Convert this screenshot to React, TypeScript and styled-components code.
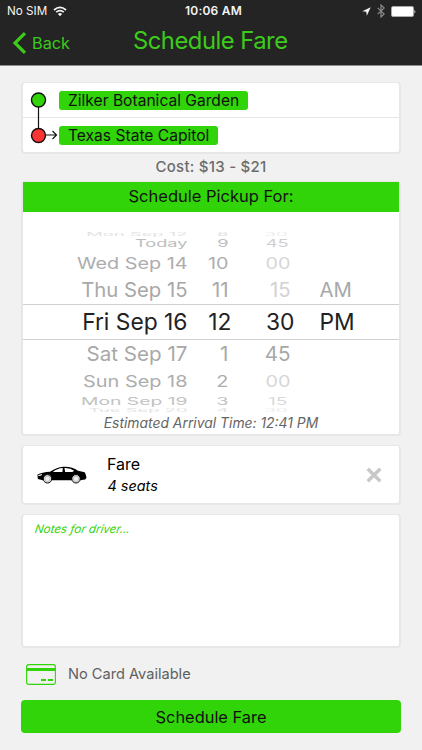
import React from "react";
import styled, { createGlobalStyle } from "styled-components";

const GREEN = "#30d408";

const GlobalStyle = createGlobalStyle`
  * { box-sizing: border-box; }
  body {
    margin: 0;
    background: #f1f1f1;
    font-family: Inter, "Liberation Sans", sans-serif;
    color: #111;
  }
`;

const Screen = styled.div`
  width: 422px;
  height: 750px;
  overflow: hidden;
  display: flex;
  flex-direction: column;
`;

const Header = styled.header`
  height: 66px;
  background: #242424;
  border-bottom: 1px solid #8f8f8f;
  flex: none;
`;

const StatusBar = styled.div`
  height: 22px;
  padding: 0 6px 0 7px;
  display: grid;
  grid-template-columns: 1fr auto 1fr;
  align-items: center;
  color: #f4f4f4;
  font-size: 11.7px;
  line-height: 22px;
`;

const StatusSide = styled.div<{ $end?: boolean }>`
  display: flex;
  align-items: center;
  justify-content: ${(p) => (p.$end ? "flex-end" : "flex-start")};
  gap: 6px;
`;

const Clock = styled.div`
  font-size: 12px;
  font-weight: 600;
  letter-spacing: 0.2px;
  padding-left: 4px;
`;

const NavBar = styled.nav`
  height: 43px;
  display: grid;
  grid-template-columns: 121px auto 1fr;
  align-items: center;
  padding-left: 12px;
  color: #3ccb1a;
`;

const BackButton = styled.div`
  display: flex;
  align-items: center;
  gap: 5px;
  font-size: 16.3px;
  line-height: 20px;
  height: 20px;
  margin-bottom: 1px;
`;

const Title = styled.h1`
  margin: 0 0 6px;
  font-size: 23.8px;
  line-height: 30px;
  font-weight: 400;
  letter-spacing: -0.5px;
`;

const Content = styled.main`
  flex: 1;
  padding: 16px 21px 0;
  display: flex;
  flex-direction: column;
`;

const Card = styled.section`
  background: #fff;
  border: 2px solid #e7e7e7;
  border-top-width: 1.5px;
  border-radius: 4px;
  flex: none;
`;

const RouteCard = styled(Card)`
  height: 72px;
  display: grid;
  grid-template-columns: 36px 1fr;
`;

const Stops = styled.div`
  grid-column: 2;
  grid-row: 1;
  margin-left: -36px;
`;

const StopRow = styled.div<{ $last?: boolean }>`
  height: ${(p) => (p.$last ? 34 : 35)}px;
  padding-left: 36px;
  display: flex;
  align-items: center;
  border-bottom: ${(p) => (p.$last ? "none" : "1.5px solid #e7e7e7")};
`;

const RouteLine = styled.svg`
  grid-column: 1;
  grid-row: 1;
  width: 36px;
  height: 68px;
  z-index: 1;
`;

const Pill = styled.span`
  height: 19px;
  padding: 0 9px;
  border-radius: 3px;
  background: ${GREEN};
  font-size: 15.6px;
  line-height: 20px;
`;

const Cost = styled.div`
  height: 27px;
  text-align: center;
  font-size: 15px;
  font-weight: 500;
  line-height: 26px;
  letter-spacing: 0.25px;
  color: #6c6c6c;
`;

const PickupCard = styled(Card)`
  height: 255px;
`;

const CardHeading = styled.h2`
  margin: 0;
  height: 30px;
  background: ${GREEN};
  font-size: 16.5px;
  font-weight: 400;
  line-height: 29px;
  text-align: center;
`;

const Wheel = styled.div`
  margin-top: 20px;
  height: 180px;
  display: flex;
  flex-direction: column;
`;

const WheelRow = styled.div<{ $h: number; $size: number; $squash: number; $ink: string; $active?: boolean }>`
  flex: none;
  height: ${(p) => p.$h}px;
  display: grid;
  grid-template-columns: 164.5px ${(p) => (p.$active ? "44px 63px 25px" : "41px 62px 29px")} 1fr;
  align-items: center;
  color: ${(p) => p.$ink};
  font-size: ${(p) => p.$size}px;
  border: solid #cfcfcf;
  border-width: ${(p) => (p.$active ? "1px 0" : "0")};
  line-height: ${(p) => p.$h}px;
  & > span {
    display: flex;
    align-items: center;
    justify-content: flex-end;
    height: 0;
    white-space: nowrap;
    transform: scaleY(${(p) => p.$squash});
  }
`;

const Minutes = styled.span<{ $ink: string; $inset?: number }>`
  color: ${(p) => p.$ink};
  padding-right: ${(p) => p.$inset ?? 0}px;
`;

const Meridiem = styled.span`
  grid-column: 5;
  && { justify-content: flex-start; }
`;

const Arrival = styled.div`
  height: 20px;
  text-align: center;
  color: #666;
  font-size: 13.9px;
  font-style: italic;
  line-height: 22px;
`;

const FareCard = styled(Card)`
  height: 60px;
  margin-top: 9px;
  padding: 0 17px 0 14px;
  display: flex;
  align-items: center;
`;

const FareText = styled.div`
  flex: 1;
  margin-left: 20px;
  color: #000;
  font-size: 16px;
  line-height: 22px;
`;

const Seats = styled.div`
  padding-left: 0.5px;
  font-size: 14.4px;
  font-style: italic;
`;

const NotesCard = styled(Card)`
  height: 134px;
  margin-top: 9px;
  padding: 5px 12px;
`;

const Placeholder = styled.div`
  width: max-content;
  color: ${GREEN};
  font-size: 11.6px;
  font-style: italic;
  line-height: 18px;
  transform: skewX(-10deg);
`;

const Payment = styled.div`
  height: 52px;
  flex: none;
  padding-left: 5px;
  display: flex;
  align-items: center;
  gap: 12px;
  color: #5f5f5f;
  font-size: 14.6px;
`;

const SubmitButton = styled.button`
  height: 33px;
  width: 380px;
  border: 0;
  padding: 0;
  border-radius: 4px;
  background: ${GREEN};
  color: #111;
  font: 400 16.4px/34px Inter, "Liberation Sans", sans-serif;
`;

type Row = {
  day: string;
  hour: string;
  minute: string;
  meridiem?: string;
  h: number;
  size: number;
  squash: number;
  ink: string;
  minuteInk: string;
  inset?: number;
  active?: boolean;
};

const rows: Row[] = [
  { day: "Mon Sep 12", hour: "8", minute: "30", h: 4, size: 18.4, squash: 0.24, ink: "#e2e2e2", minuteInk: "#ececec", inset: 3 },
  { day: "Today", hour: "9", minute: "45", h: 14.5, size: 18.2, squash: 0.58, ink: "#bdbdbd", minuteInk: "#cecece", inset: 2 },
  { day: "Wed Sep 14", hour: "10", minute: "00", h: 25, size: 19.8, squash: 0.8, ink: "#adadad", minuteInk: "#d6d6d6" },
  { day: "Thu Sep 15", hour: "11", minute: "15", meridiem: "AM", h: 28.5, size: 20.3, squash: 0.97, ink: "#a8a8a8", minuteInk: "#d2d2d2" },
  { day: "Fri Sep 16", hour: "12", minute: "30", meridiem: "PM", h: 36, size: 22.8, squash: 1, ink: "#222", minuteInk: "#222", active: true },
  { day: "Sat Sep 17", hour: "1", minute: "45", h: 28, size: 20.6, squash: 0.97, ink: "#a8a8a8", minuteInk: "#a8a8a8" },
  { day: "Sun Sep 18", hour: "2", minute: "00", h: 25, size: 19.9, squash: 0.8, ink: "#adadad", minuteInk: "#d6d6d6" },
  { day: "Mon Sep 19", hour: "3", minute: "15", h: 15, size: 19.3, squash: 0.55, ink: "#c2c2c2", minuteInk: "#dadada", inset: 3 },
  { day: "Tue Sep 20", hour: "4", minute: "30", h: 4, size: 18.4, squash: 0.24, ink: "#e2e2e2", minuteInk: "#ececec", inset: 3 },
];

const WifiIcon = () => (
  <svg width="14" height="11" viewBox="0 0 14 11" fill="none" stroke="#f4f4f4" strokeWidth="1.7">
    <path d="M1 4Q7-1.2 13 4M3.2 6.2Q7 2.9 10.8 6.2" />
    <path d="M4.9 7.9Q7 6.3 9.1 7.9L7 10.2Z" fill="#f4f4f4" stroke="none" />
  </svg>
);

const LocationIcon = () => (
  <svg width="9" height="9" viewBox="0 0 9 9" fill="#f4f4f4">
    <path d="M8.7.3.3 4.2l4 .5.5 4Z" />
  </svg>
);

const BluetoothIcon = () => (
  <svg width="8" height="14" viewBox="0 0 8 14" fill="none" stroke="#8b8b8b" strokeWidth="1.2">
    <path d="M.7 3.9 7.2 10 4 13V1l3.2 3L.7 10.1" />
  </svg>
);

const BatteryIcon = () => (
  <svg width="25" height="11" viewBox="0 0 25 11">
    <rect x=".5" y=".5" width="22" height="10" rx="1.5" fill="#fff" stroke="#a9a9a9" />
    <path d="M23.5 3.5q1.5 2 0 4Z" fill="#fff" />
  </svg>
);

const ChevronIcon = () => (
  <svg width="15" height="22" viewBox="0 0 15 22" fill="none" stroke="#3ccb1a" strokeWidth="3.2">
    <path d="M13 1.2 3 11l10 9.8" />
  </svg>
);

const CarIcon = () => (
  <svg width="50" height="18" viewBox="0 0 50 18">
    <path d="M.5 8.6Q5 6.2 13 5.8 20 1 26 .7q9-.5 15 4l6.7 1.5 1 2.3.8 3.2-1.3 1.7-5 .8H5.8L.8 13Z" fill="#000" />
    <path d="M15.8 6q4.5-3.6 10-3.9l-.4 4ZM27.5 2.1q6-.2 9.7 2.6l-1.8 1.4h-7.3ZM1.2 8.9l4-1-.8 1.5-3 .6Z" fill="#fff" />
    <g fill="#eee" stroke="#000" strokeWidth="1">
      <circle cx="10.5" cy="12.8" r="4.2" />
      <circle cx="39" cy="12.8" r="4.2" />
    </g>
    <g fill="none" stroke="#999" strokeWidth=".6">
      <circle cx="10.5" cy="12.8" r="2.7" />
      <circle cx="39" cy="12.8" r="2.7" />
    </g>
  </svg>
);

const CloseIcon = () => (
  <svg width="16" height="16" viewBox="0 0 16 16" stroke="#c8c8c8" strokeWidth="3.4">
    <path d="m1.7 1.7 12.6 12.6m0-12.6L1.7 14.3" />
  </svg>
);

const CreditCardIcon = () => (
  <svg width="30" height="21" viewBox="0 0 30 21" fill="none" stroke={GREEN}>
    <rect x=".6" y=".6" width="28.8" height="19.8" rx="2.4" strokeWidth="1.1" />
    <path d="M1 5.5h28" strokeWidth="3" />
    <path d="M15 16h5m2 0h5" strokeWidth="1.9" />
  </svg>
);

export default function App() {
  return (
    <Screen>
      <GlobalStyle />
      <Header>
        <StatusBar>
          <StatusSide>
            No SIM
            <WifiIcon />
          </StatusSide>
          <Clock>10:06 AM</Clock>
          <StatusSide $end>
            <LocationIcon />
            <BluetoothIcon />
            <BatteryIcon />
          </StatusSide>
        </StatusBar>
        <NavBar>
          <BackButton>
            <ChevronIcon />
            Back
          </BackButton>
          <Title>Schedule Fare</Title>
        </NavBar>
      </Header>
      <Content>
        <RouteCard>
          <RouteLine viewBox="0 0 36 68">
            <path d="M15.5 17v35M23 52h10M29.5 48l4 4-4 4" fill="none" stroke="#111" strokeWidth="1.2" />
            <circle cx="15.5" cy="17" r="7" fill={GREEN} stroke="#111" strokeWidth="1.4" />
            <circle cx="15.5" cy="52.5" r="7" fill="#fb3434" stroke="#111" strokeWidth="1.4" />
          </RouteLine>
          <Stops>
            <StopRow>
              <Pill>Zilker Botanical Garden</Pill>
            </StopRow>
            <StopRow $last>
              <Pill>Texas State Capitol</Pill>
            </StopRow>
          </Stops>
        </RouteCard>
        <Cost>Cost: $13 - $21</Cost>
        <PickupCard>
          <CardHeading>Schedule Pickup For:</CardHeading>
          <Wheel>
            {rows.map((r) => (
              <WheelRow key={r.day} $h={r.h} $size={r.size} $squash={r.squash} $ink={r.ink} $active={r.active}>
                <span>{r.day}</span>
                <span>{r.hour}</span>
                <Minutes $ink={r.minuteInk} $inset={r.inset}>
                  {r.minute}
                </Minutes>
                {r.meridiem && <Meridiem>{r.meridiem}</Meridiem>}
              </WheelRow>
            ))}
          </Wheel>
          <Arrival>Estimated Arrival Time: 12:41 PM</Arrival>
        </PickupCard>
        <FareCard>
          <CarIcon />
          <FareText>
            Fare
            <Seats>4 seats</Seats>
          </FareText>
          <CloseIcon />
        </FareCard>
        <NotesCard>
          <Placeholder>Notes for driver...</Placeholder>
        </NotesCard>
        <Payment>
          <CreditCardIcon />
          No Card Available
        </Payment>
        <SubmitButton>Schedule Fare</SubmitButton>
      </Content>
    </Screen>
  );
}
